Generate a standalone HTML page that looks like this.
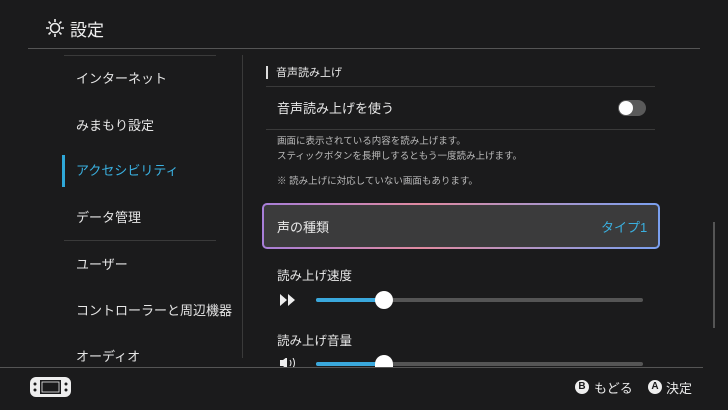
<!DOCTYPE html>
<html><head><meta charset="utf-8"><style>
*{margin:0;padding:0;box-sizing:border-box}
body{width:728px;height:410px;background:#1b1b1c;color:#e8e8e8;font-family:"Liberation Sans","Noto Sans CJK JP",sans-serif;position:relative;overflow:hidden}
.a{position:absolute;white-space:nowrap}
.nav{left:76px;font-size:13px;color:#e6e6e6}
.line{position:absolute;height:1px;background:#444}
</style></head><body>
<svg class="a" style="left:45px;top:18px" width="20" height="20" viewBox="0 0 20 20" fill="none" stroke="#eee" stroke-width="1.6"><circle cx="10" cy="10" r="4.5"/><path d="M10 1v3M10 16v3M1 10h3M16 10h3M3.6 3.6l2.1 2.1M14.3 14.3l2.1 2.1M3.6 16.4l2.1-2.1M14.3 5.7l2.1-2.1"/></svg>
<div class="a" style="left:70px;top:16px;font-size:17px;color:#f0f0f0">設定</div>
<div class="line" style="left:28px;top:48px;width:672px;background:#555"></div>
<div class="line" style="left:64px;top:55px;width:152px;background:#3a3a3a"></div>
<div class="line" style="left:64px;top:240px;width:152px;background:#3a3a3a"></div>
<div class="line" style="left:242px;top:55px;width:1px;height:303px;background:#3a3a3a"></div>
<div class="a nav" style="top:68px">インターネット</div>
<div class="a nav" style="top:115px">みまもり設定</div>
<div class="a" style="left:62px;top:155px;width:3px;height:32px;background:#2fa8d8"></div>
<div class="a nav" style="top:160px;color:#3ab0e0">アクセシビリティ</div>
<div class="a nav" style="top:207px">データ管理</div>
<div class="a nav" style="top:254px">ユーザー</div>
<div class="a nav" style="top:300px">コントローラーと周辺機器</div>
<div class="a nav" style="top:346px">オーディオ</div>
<div class="a" style="left:266px;top:66px;width:2px;height:13px;background:#ddd"></div>
<div class="a" style="left:276px;top:64px;font-size:11px">音声読み上げ</div>
<div class="line" style="left:266px;top:86px;width:389px;background:#3a3a3a"></div>
<div class="a" style="left:277px;top:98px;font-size:13px">音声読み上げを使う</div>
<div class="a" style="left:618px;top:100px;width:28px;height:16px;border-radius:8px;background:#5a5a5a"></div>
<div class="a" style="left:619px;top:101px;width:14px;height:14px;border-radius:7px;background:#fff"></div>
<div class="line" style="left:266px;top:129px;width:389px;background:#3a3a3a"></div>
<div class="a" style="left:277px;top:134px;font-size:9.5px;color:#bbb;line-height:15px">画面に表示されている内容を読み上げます。<br>スティックボタンを長押しするともう一度読み上げます。</div>
<div class="a" style="left:277px;top:173px;font-size:9.5px;color:#bbb">※ 読み上げに対応していない画面もあります。</div>
<div class="a" style="left:262px;top:203px;width:398px;height:46px;border-radius:5px;padding:2px;background:linear-gradient(90deg,#a77ed8,#e08aa0 40%,#7aa0f0)"><div style="width:100%;height:100%;background:#3b3b3c;border-radius:3px"></div></div>
<div class="a" style="left:277px;top:217px;font-size:13px">声の種類</div>
<div class="a" style="left:601px;top:217px;font-size:13px;color:#3ab0e0">タイプ1</div>
<div class="a" style="left:277px;top:265px;font-size:12.5px">読み上げ速度</div>
<svg class="a" style="left:280px;top:294px" width="16" height="12"><path d="M0 0l7 6-7 6zM8 0l7 6-7 6z" fill="#eee"/></svg>
<div class="a" style="left:316px;top:298px;width:327px;height:4px;border-radius:2px;background:#555"></div>
<div class="a" style="left:316px;top:298px;width:68px;height:4px;border-radius:2px;background:#3aa8dc"></div>
<div class="a" style="left:375px;top:291px;width:18px;height:18px;border-radius:9px;background:#fff"></div>
<div class="a" style="left:277px;top:330px;font-size:12.5px">読み上げ音量</div>
<svg class="a" style="left:280px;top:358px" width="18" height="9"><path d="M0 2h3l4-3v12l-4-3H0z" fill="#eee"/><path d="M10 2q2 3 0 6M13 0q3 5 0 10" stroke="#eee" fill="none"/></svg>
<div class="a" style="left:316px;top:362px;width:327px;height:4px;border-radius:2px;background:#555"></div>
<div class="a" style="left:316px;top:362px;width:68px;height:4px;border-radius:2px;background:#3aa8dc"></div>
<div class="a" style="left:375px;top:355px;width:18px;height:12px;border-radius:9px 9px 0 0;background:#fff"></div>
<div class="a" style="left:713px;top:222px;width:2px;height:106px;background:#555"></div>
<div class="a" style="left:0;top:367px;width:728px;height:43px;background:#1b1b1c"></div>
<div class="line" style="left:0;top:367px;width:703px;background:#555"></div>
<svg class="a" style="left:30px;top:377px" width="41" height="20"><rect x="0" y="0" width="41" height="20" rx="6" fill="#eee"/><rect x="10" y="3" width="21" height="14" fill="#1b1b1c"/><rect x="12" y="5" width="17" height="10" fill="none" stroke="#eee" stroke-width="0.8"/><circle cx="5" cy="7" r="1.5" fill="#1b1b1c"/><circle cx="5" cy="13" r="1.5" fill="#1b1b1c"/><circle cx="36" cy="7" r="1.5" fill="#1b1b1c"/><circle cx="36" cy="13" r="1.5" fill="#1b1b1c"/></svg>
<div class="a" style="left:575px;top:380px;width:14px;height:14px;border-radius:7px;background:#eee;color:#1b1b1c;font-size:10px;font-weight:bold;text-align:center;line-height:14px">B</div>
<div class="a" style="left:594px;top:378px;font-size:13px">もどる</div>
<div class="a" style="left:648px;top:380px;width:14px;height:14px;border-radius:7px;background:#eee;color:#1b1b1c;font-size:10px;font-weight:bold;text-align:center;line-height:14px">A</div>
<div class="a" style="left:666px;top:378px;font-size:13px">決定</div>
</body></html>
